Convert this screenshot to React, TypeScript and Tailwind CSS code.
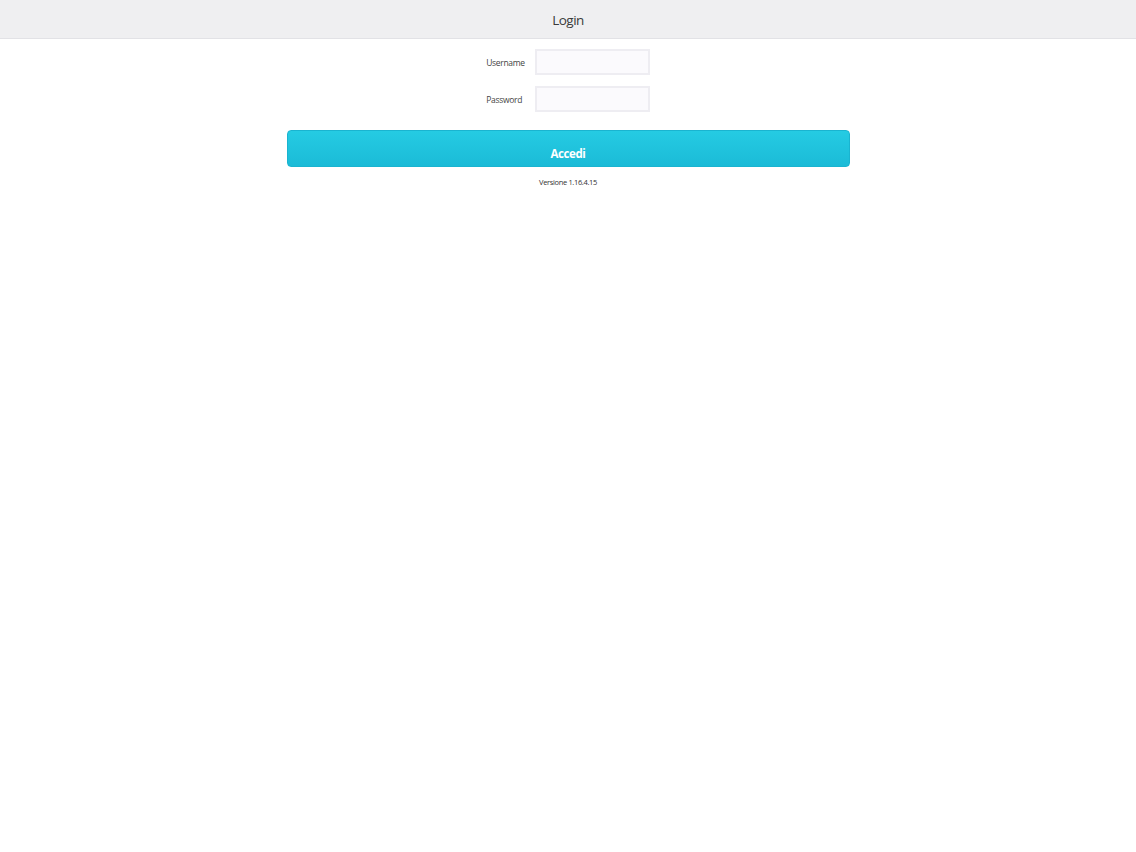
import React from "react";

const font = { fontFamily: '"Open Sans", "Liberation Sans", sans-serif' };

export default function App() {
  return (
    <div className="w-full min-h-[852px] bg-white text-[#333]" style={font}>
      {/* Header */}
      <div className="h-[39px] bg-[#efeff1] border-b border-[#e2e2e6] flex items-center justify-center">
        <span className="text-[13.5px] tracking-[-0.5px] text-[#3a3a3a] pt-[2px]">Login</span>
      </div>

      {/* Form */}
      <div className="flex flex-col items-center pt-[10px]">
        <div className="grid grid-cols-[auto_115px] gap-x-[10px] gap-y-[11px] items-center">
          <label className="text-[8.5px] tracking-[-0.3px] text-[#444] text-right pt-[2px]">Username</label>
          <input className="h-[26px] border-2 border-[#eeedf2] bg-[#fbfafd] outline-none" />
          <label className="text-[8.5px] tracking-[-0.3px] text-[#444] text-left pt-[2px]">Password</label>
          <input type="password" className="h-[26px] border-2 border-[#eeedf2] bg-[#fbfafd] outline-none" />
        </div>

        <button className="mt-[18px] w-[563px] h-[37px] pt-[10px] rounded-[4px] bg-gradient-to-b from-[#25cbe3] to-[#1bbbd7] border border-[#1ab4d0] text-white text-[11.5px] font-bold tracking-[-0.4px]">
          Accedi
        </button>

        <div className="mt-[10px] text-[7.5px] tracking-[-0.35px] text-[#333]">Versione 1.16.4.15</div>
      </div>
    </div>
  );
}
